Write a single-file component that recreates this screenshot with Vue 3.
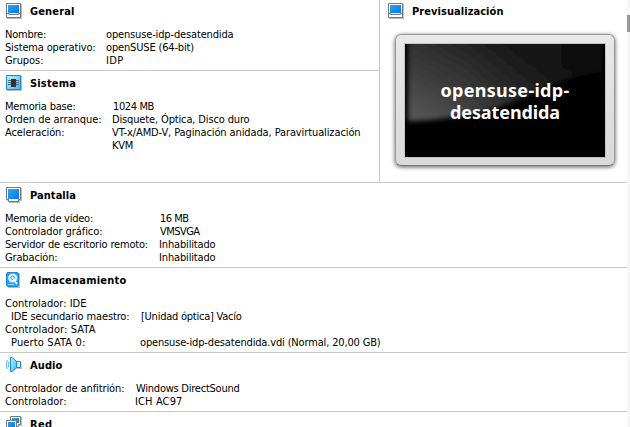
<script setup>
import { onMounted, ref } from 'vue'

const sections = [
  { icon: 'general', title: 'General', tw: 44.5, rows: [
    { k: 'Nombre:', kw: 41, v: 'opensuse-idp-desatendida', vw: 127.5, x: 106 },
    { k: 'Sistema operativo:', kw: 90.5, v: 'openSUSE (64-bit)', vw: 88, x: 106 },
    { k: 'Grupos:', kw: 38.5, v: 'IDP', vw: 17.5, x: 106 },
  ] },
  { icon: 'system', title: 'Sistema', tw: 46, rows: [
    { k: 'Memoria base:', kw: 70.5, v: '1024 MB', vw: 41, x: 113 },
    { k: 'Orden de arranque:', kw: 96.5, v: 'Disquete, Óptica, Disco duro', vw: 137.5, x: 112 },
    { k: 'Aceleración:', kw: 59.5, v: 'VT-x/AMD-V, Paginación anidada, Paravirtualización', vw: 248.5, x: 112 },
    { k: '', kw: 0, v: 'KVM', vw: 21, x: 112 },
  ] },
  { icon: 'display', title: 'Pantalla', tw: 46, rows: [
    { k: 'Memoria de vídeo:', kw: 88, v: '16 MB', vw: 28.5, x: 160 },
    { k: 'Controlador gráfico:', kw: 97.5, v: 'VMSVGA', vw: 39.5, x: 160 },
    { k: 'Servidor de escritorio remoto:', kw: 143, v: 'Inhabilitado', vw: 56.5, x: 159 },
    { k: 'Grabación:', kw: 52.5, v: 'Inhabilitado', vw: 56.5, x: 159 },
  ] },
  { icon: 'storage', title: 'Almacenamiento', tw: 96.5, rows: [
    { k: 'Controlador: IDE', kw: 81.5 },
    { k: 'IDE secundario maestro:', kw: 118.5, v: '[Unidad óptica] Vacío', vw: 100.5, x: 141, sub: true },
    { k: 'Controlador: SATA', kw: 90.5 },
    { k: 'Puerto SATA 0:', kw: 74.5, v: 'opensuse-idp-desatendida.vdi (Normal, 20,00 GB)', vw: 240.5, x: 140, sub: true },
  ] },
  { icon: 'audio', title: 'Audio', tw: 32.5, rows: [
    { k: 'Controlador de anfitrión:', kw: 119.5, v: 'Windows DirectSound', vw: 103.5, x: 136 },
    { k: 'Controlador:', kw: 61.5, v: 'ICH AC97', vw: 47.5, x: 135 },
  ] },
  { icon: 'network', title: 'Red', tw: 22.5, rows: [] },
]

const root = ref(null)

// Tracks each run so that it fills its nominal width
onMounted(() => {
  root.value.querySelectorAll('[data-w]').forEach((el) => {
    const w = Number(el.dataset.w)
    const n = el.textContent.length
    if (w && n) el.style.letterSpacing = (w - el.getBoundingClientRect().width) / n + 'px'
  })
})
</script>

<template>
  <div ref="root" class="details">
    <svg class="defs" width="0" height="0">
      <defs>
        <linearGradient id="blue" x1="0" y1="0" x2="1" y2="1">
          <stop offset="0" stop-color="#2aa8e2" /><stop offset="1" stop-color="#0078f4" />
        </linearGradient>
        <linearGradient id="pale" x1="0" y1="0" x2="1" y2="1">
          <stop offset="0" stop-color="#c5f3ff" /><stop offset="1" stop-color="#39b9f5" />
        </linearGradient>
        <symbol id="general" viewBox="0 0 16 16">
          <path d="M1 1h15v15H1z" fill="#bbb" />
          <path d="M.5.5h14v14H.5z" fill="#fff" stroke="#777" />
          <path d="M2 2h11v8H2z" fill="url(#blue)" />
          <path d="M1 10.5h1.5v1h10v-1H14" fill="none" stroke="#777" />
        </symbol>
        <symbol id="system" viewBox="0 0 16 16">
          <path d="M1 1h15v15H1z" fill="#bbb" />
          <path d="M.5.5h14v14H.5z" fill="url(#pale)" stroke="#168bd2" />
          <path d="M2 5.500h11M2 7.5h11M2 9.500h11" stroke="#567" />
          <path d="M5 4h5v8H5z" fill="#303338" />
        </symbol>
        <symbol id="display" viewBox="0 0 16 16">
          <path d="M1 1h15v13h-2v2H3v-2H1z" fill="#bbb" />
          <path d="M.5.5h14v12h-2v2h-10v-2h-2z" fill="#fff" stroke="#777" />
          <path d="M2 2h11v10H2z" fill="url(#blue)" />
        </symbol>
        <symbol id="storage" viewBox="0 0 16 16">
          <path d="M2 1h12v15H2z" fill="#bbb" />
          <path d="M1.500.5h10l1 1v12l-1 1h-10l-1-1v-12z" fill="#2aa5f2" stroke="#1687d4" />
          <circle cx="6.700" cy="6" r="4.600" fill="#d7f3ff" />
          <circle cx="6.700" cy="5.800" r="1.700" fill="#fff" stroke="#299ce4" />
          <path d="M7.5 7l3.500 5" stroke="#fff" stroke-width="1.5" />
          <path d="M2 12.5h6" stroke="#85d5ff" />
        </symbol>
        <symbol id="audio" viewBox="0 0 16 16">
          <path d="M11 11.500h5v-6M6 15l5-4" fill="none" stroke="#bbb" />
          <path d="M10 4.500h4.500v6H10z" fill="#c4efff" stroke="#168bd2" />
          <path d="M4.500.5h1.500l4.500 4v6l-4.500 4H4.500z" fill="url(#pale)" stroke="#168bd2" />
          <path d="M3 4.500Q1.900 7.5 3 10.500M1.200 3Q-.5 7.5 1.200 12" fill="none" stroke="#41a6e2" stroke-width=".9" />
        </symbol>
        <symbol id="network" viewBox="0 0 16 16">
          <path d="M5 1h11v9H5zM1 6h11v9H1z" fill="#bbb" />
          <path d="M4.500.5h10v8h-2v2h-6v-2h-2z" fill="#fff" stroke="#777" />
          <path d="M6 2h7v5H6z" fill="url(#blue)" />
          <path d="M.5 4.500h10v8h-2v2h-6v-2h-2z" fill="#fff" stroke="#777" />
          <path d="M2 6h7v5H2z" fill="url(#blue)" />
        </symbol>
      </defs>
    </svg>

    <main class="list">
      <section v-for="s in sections" :key="s.title" class="section" :class="s.icon + '-box'">
        <header class="head">
          <svg class="icon"><use :href="'#' + s.icon" /></svg>
          <span class="title" :data-w="s.tw">{{ s.title }}</span>
        </header>
        <div v-for="(r, i) in s.rows" :key="i" class="row" :class="{ sub: r.sub }">
          <div class="key" :style="{ width: (r.x || 200) + 'px' }"><span :data-w="r.kw">{{ r.k }}</span></div>
          <span v-if="r.v" :data-w="r.vw">{{ r.v }}</span>
        </div>
      </section>
    </main>

    <aside class="preview">
      <header class="head">
        <svg class="icon"><use href="#general" /></svg>
        <span class="title" data-w="91.5">Previsualización</span>
      </header>
      <div class="monitor">
        <div class="screen">
          <svg class="gloss" viewBox="0 0 200 113">
            <defs>
              <linearGradient id="shine" gradientUnits="userSpaceOnUse" x1="15" y1="80" x2="75" y2="-25">
                <stop offset="0" stop-color="#585858" /><stop offset=".4" stop-color="#3a3a3a" /><stop offset="1" stop-color="#171717" />
              </linearGradient>
              <linearGradient id="dim" x1="0" y1="0" x2="1" y2="0">
                <stop offset=".3" stop-color="#000" stop-opacity="0" /><stop offset="1" stop-color="#000" stop-opacity=".35" />
              </linearGradient>
              <filter id="soft" x="-10%" y="-10%" width="120%" height="120%"><feGaussianBlur stdDeviation="2.5" /></filter>
            </defs>
            <g filter="url(#soft)">
              <path d="M3 -6H197V28C178 29 158 36 125 51Q85 69 50 73Q25 77 3 77z" fill="url(#shine)" />
              <path d="M3 -6H197V28C178 29 158 36 125 51Q85 69 50 73Q25 77 3 77z" fill="url(#dim)" />
            </g>
          </svg>
          <div class="name">
            <span data-w="129">opensuse-idp-</span>
            <span data-w="110">desatendida</span>
          </div>
        </div>
      </div>
    </aside>
    <div class="scroll"><div class="thumb"></div></div>
  </div>
</template>

<style>
body { background: #fff; overflow: hidden; }
</style>

<style scoped>
.details {
  position: relative;
  width: 630px;
  height: 427px;
  overflow: hidden;
  background: #fff;
  color: #000;
  font: 11px/13px "DejaVu Sans Condensed", "DejaVu Sans", sans-serif;
  font-stretch: condensed;
  white-space: nowrap;
}
.defs { position: absolute; }
.list { margin-top: -2px; }
.section {
  box-sizing: border-box;
  border-top: 1px solid #c8c8c8;
  padding-bottom: 3px;
}
.general-box { border-top-color: transparent; }
.system-box { width: 380px; height: 112px; }
.head {
  display: flex;
  align-items: center;
  gap: 8px;
  height: 24px;
  margin-bottom: 5px;
  padding-left: 6px;
}
.icon { width: 16px; height: 16px; flex: none; }
.title { font-weight: bold; }
.row { display: flex; height: 13px; }
.key { box-sizing: border-box; flex: none; padding-left: 5px; }
.sub .key { padding-left: 11px; }
.preview {
  position: absolute;
  left: 379px;
  top: -1px;
  box-sizing: border-box;
  width: 248px;
  height: 184px;
  border-left: 1px solid #c8c8c8;
  border-bottom: 1px solid #c8c8c8;
  background: #fff;
}
.preview .head { padding-left: 8px; }
.monitor {
  box-sizing: border-box;
  width: 220px;
  height: 132px;
  margin: 11px 0 0 15px;
  padding: 8px;
  border: 1px solid #999;
  border-bottom-color: #777;
  border-radius: 6px;
  background: linear-gradient(#e8e8e8, #d9d9d9);
  box-shadow: 0 1px 4px rgba(0, 0, 0, .65);
}
.screen {
  display: grid;
  width: 200px;
  height: 113px;
  border: 1px solid #c4c4c4;
  background: #000;
  overflow: hidden;
}
.gloss { grid-area: 1 / 1; width: 200px; height: 113px; }
.name {
  grid-area: 1 / 1;
  z-index: 1;
  display: flex;
  flex-direction: column;
  align-items: center;
  justify-content: center;
  color: #fff;
  font: bold 18px/22px "Noto Sans", "Open Sans", sans-serif;
}
.scroll {
  position: absolute;
  right: 0;
  top: 0;
  width: 3px;
  height: 427px;
  background: #f7f7f7;
}
.thumb { height: 17px; margin-top: 15px; background: #999; }
</style>
